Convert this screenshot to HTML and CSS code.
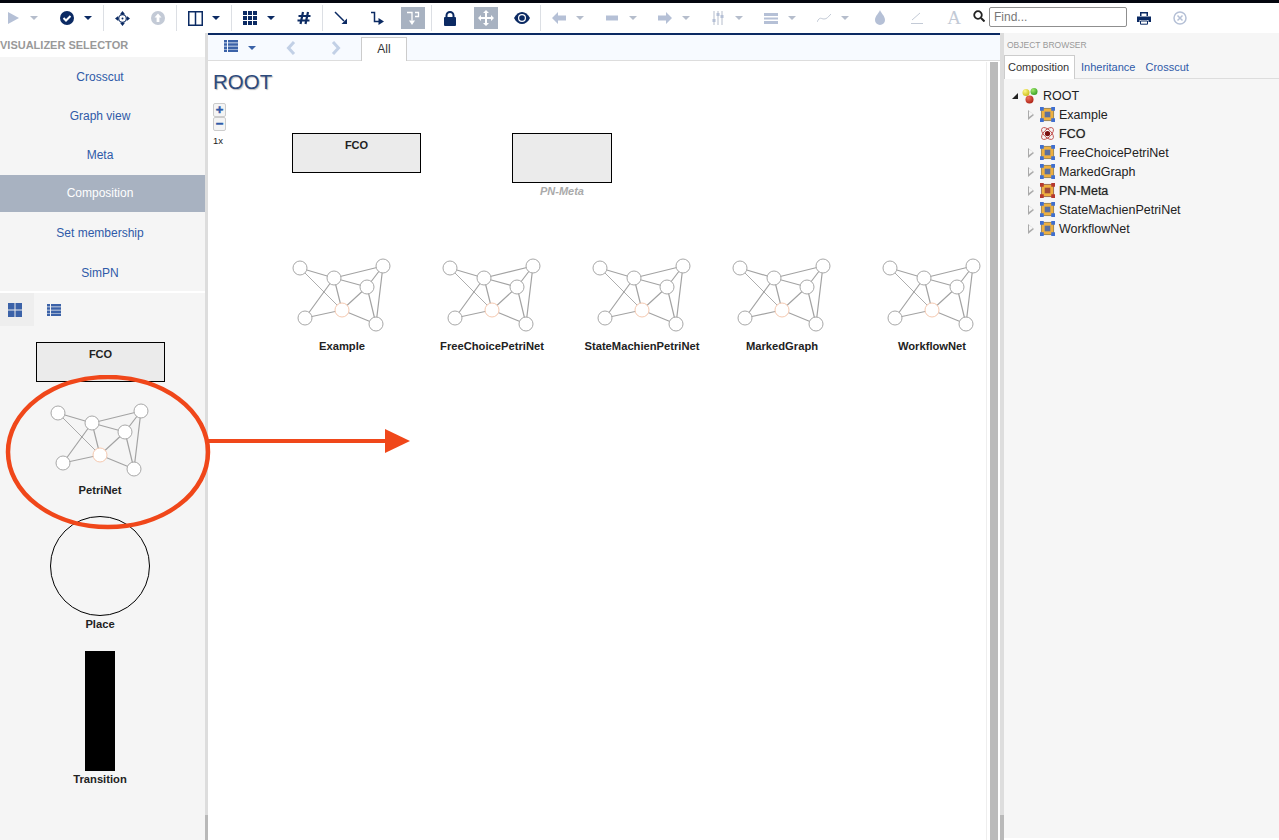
FILE: index.html
```html
<!DOCTYPE html>
<html lang="en">
<head>
  <meta charset="UTF-8">
  <title>ROOT - Composition</title>
  <link rel="stylesheet" href="styles.css">
</head>
<body>
  <svg class="defs" width="0" height="0">
    <defs>
      <radialGradient id="ball-y" cx=".35" cy=".3" r=".8"><stop offset="0" stop-color="#fdf78a"/><stop offset="1" stop-color="#c9b90f"/></radialGradient>
      <radialGradient id="ball-g" cx=".35" cy=".3" r=".8"><stop offset="0" stop-color="#9fe86b"/><stop offset="1" stop-color="#2f9a1f"/></radialGradient>
      <radialGradient id="ball-r" cx=".35" cy=".3" r=".8"><stop offset="0" stop-color="#f0705c"/><stop offset="1" stop-color="#a81c10"/></radialGradient>
    </defs>
    <symbol id="net" viewBox="0 0 104 76">
      <g class="net-edges">
        <path d="M10 10L44 20M44 20L93 8M44 20L77 29M44 20L52 52M44 20L15 60M93 8L77 29M93 8L86 66M77 29L52 52M77 29L86 66M52 52L15 60M52 52L86 66"/>
        <path class="thin" d="M10 10L52 52"/>
      </g>
      <g class="net-nodes">
        <circle cx="10" cy="10" r="7"/>
        <circle cx="44" cy="20" r="7"/>
        <circle cx="93" cy="8" r="7"/>
        <circle cx="77" cy="29" r="7"/>
        <circle cx="15" cy="60" r="7"/>
        <circle cx="86" cy="66" r="7"/>
        <circle class="hot" cx="52" cy="52" r="7"/>
      </g>
    </symbol>
    <symbol id="model" viewBox="0 0 16 16">
      <rect x="1.500" y="1.500" width="13" height="13" fill="#eeb040" stroke="#9a8450"/>
      <rect x="5" y="5" width="6" height="6" fill="#5b6f9e"/>
      <path fill="#3f6fd0" d="M0 0h4v4H0zM12 0h4v4h-4zM0 12h4v4H0zM12 12h4v4h-4z"/>
    </symbol>
    <symbol id="model-meta" viewBox="0 0 16 16">
      <rect x="1.500" y="1.500" width="13" height="13" fill="#eeb040" stroke="#9a6a50"/>
      <rect x="5" y="5" width="6" height="6" fill="#a04a3a"/>
      <path fill="#b5392f" d="M0 0h4v4H0zM12 0h4v4h-4zM0 12h4v4H0zM12 12h4v4h-4z"/>
    </symbol>
  </svg>

  <div class="topline"></div>

  <!-- toolbar -->
  <div class="toolbar">
    <div class="tb-group">
      <div class="tb-pair">
        <span class="tb-btn"><svg width="16" height="16" viewBox="0 0 16 16"><path class="off" d="M3 2l11 6-11 6z"/></svg></span>
        <span class="caret off-caret"></span>
      </div>
      <div class="tb-pair">
        <span class="tb-btn"><svg width="16" height="16" viewBox="0 0 16 16"><circle class="on" cx="8" cy="8" r="7"/><path d="M4.500 8l2.500 2.500 4.500-4.500" fill="none" stroke="#fff" stroke-width="2"/></svg></span>
        <span class="caret"></span>
      </div>
    </div>
    <span class="tb-sep"></span>
    <div class="tb-group">
      <span class="tb-btn"><svg width="15" height="15" viewBox="0 0 15 15"><circle cx="7.500" cy="7.500" r="3.800" fill="none" stroke="#0b2a63" stroke-width="1.200"/><circle class="on" cx="7.500" cy="7.500" r="1"/><path class="on" d="M7.500 0l2.500 3.200H5zM7.500 15L5 11.800h5zM0 7.500l3.200-2.500v5zM15 7.500L11.800 10V5z"/></svg></span>
      <span class="tb-btn"><svg width="16" height="16" viewBox="0 0 16 16"><circle class="off-soft" cx="8" cy="8" r="7"/><path d="M8 3.500l3.500 4H9.400V12H6.600V7.500H4.500z" fill="#fff"/></svg></span>
    </div>
    <span class="tb-sep"></span>
    <div class="tb-pair">
      <span class="tb-btn"><svg width="15" height="15" viewBox="0 0 15 15"><path d="M.75.75h13.500v13.500H.75zM7.500.75v13.500" fill="none" stroke="#0b2a63" stroke-width="1.500"/></svg></span>
      <span class="caret"></span>
    </div>
    <span class="tb-sep"></span>
    <div class="tb-group">
      <div class="tb-pair">
        <span class="tb-btn"><svg width="14" height="14" viewBox="0 0 14 14"><path class="on" d="M0 0h4v4H0zM5 0h4v4H5zM10 0h4v4h-4zM0 5h4v4H0zM5 5h4v4H5zM10 5h4v4h-4zM0 10h4v4H0zM5 10h4v4H5zM10 10h4v4h-4z"/></svg></span>
        <span class="caret"></span>
      </div>
      <span class="tb-btn"><svg width="14" height="14" viewBox="0 0 14 14"><path d="M6 1L3.500 13M11 1L8.500 13M1.500 5h12M.5 9.500h12" fill="none" stroke="#0b2a63" stroke-width="2.200"/></svg></span>
    </div>
    <span class="tb-sep"></span>
    <div class="tb-group">
      <span class="tb-btn"><svg width="14" height="14" viewBox="0 0 14 14"><path d="M1 1l9 9" stroke="#0b2a63" stroke-width="1.500"/><path class="on" d="M13 13H7.500L13 7.500z"/></svg></span>
      <span class="tb-btn"><svg width="14" height="14" viewBox="0 0 14 14"><path d="M1 1.500h3.500v9H9" fill="none" stroke="#0b2a63" stroke-width="1.500"/><path class="on" d="M14 10.500L8.500 7v7z"/></svg></span>
      <span class="tb-btn tb-active"><svg width="14" height="16" viewBox="0 0 14 16"><path d="M1 2.500h5v8M9 2.500h3.500v4H9" fill="none" stroke="#fff" stroke-width="1.300"/><path fill="#fff" d="M6 15L3 10.500h6z"/></svg></span>
    </div>
    <span class="tb-sep"></span>
    <div class="tb-group">
      <span class="tb-btn"><svg width="14" height="15" viewBox="0 0 14 15"><rect class="on" x="1" y="6" width="12" height="9" rx="1"/><path d="M3.500 7V4.500a3.500 3.500 0 0 1 7 0V7" fill="none" stroke="#0b2a63" stroke-width="2"/></svg></span>
      <span class="tb-btn tb-active"><svg width="16" height="16" viewBox="0 0 16 16"><path fill="#fff" d="M8 0l3 3H9v4h4V5l3 3-3 3V9H9v4h2l-3 3-3-3h2V9H3v2L0 8l3-3v2h4V3H5z"/></svg></span>
      <span class="tb-btn"><svg width="16" height="12" viewBox="0 0 16 12"><path class="on" d="M0 6c2-4 5-6 8-6s6 2 8 6c-2 4-5 6-8 6s-6-2-8-6z"/><circle cx="8" cy="6" r="4" fill="#fff"/><circle class="on" cx="8" cy="6" r="2.800"/></svg></span>
    </div>
    <span class="tb-sep"></span>
    <div class="tb-group tb-tight">
      <div class="tb-pair">
        <span class="tb-btn"><svg width="14" height="12" viewBox="0 0 14 12"><path class="off" d="M0 6l6-6v3.500h8v5H6V12z"/></svg></span>
        <span class="caret off-caret"></span>
      </div>
      <div class="tb-pair">
        <span class="tb-btn"><svg width="12" height="6" viewBox="0 0 12 6"><path class="off" d="M0 .5h12v5H0z"/></svg></span>
        <span class="caret off-caret"></span>
      </div>
      <div class="tb-pair">
        <span class="tb-btn"><svg width="14" height="12" viewBox="0 0 14 12"><path class="off" d="M14 6L8 0v3.500H0v5h8V12z"/></svg></span>
        <span class="caret off-caret"></span>
      </div>
      <div class="tb-pair">
        <span class="tb-btn"><svg width="12" height="14" viewBox="0 0 12 14"><path d="M2 0v14M6 0v14M10 0v14" stroke="#b5bdcc"/><path class="off" d="M.5 8h3v3h-3zM4.500 2h3v3h-3zM8.500 4h3v3h-3z"/></svg></span>
        <span class="caret off-caret"></span>
      </div>
      <div class="tb-pair">
        <span class="tb-btn"><svg width="14" height="11" viewBox="0 0 14 11"><path class="off" d="M0 0h14v3H0zM0 4.500h14v2H0zM0 8h14v3H0z"/></svg></span>
        <span class="caret off-caret"></span>
      </div>
      <div class="tb-pair">
        <span class="tb-btn"><svg width="14" height="10" viewBox="0 0 14 10"><path d="M0 9c3-6 4-3 7-3s4-2 7-5" fill="none" stroke="#c3cad6"/></svg></span>
        <span class="caret off-caret"></span>
      </div>
    </div>
    <div class="tb-group tb-last">
      <span class="tb-btn"><svg width="12" height="16" viewBox="0 0 12 16"><path class="off" d="M6 0c1 3 5 6 5 10a5 5 0 0 1-10 0C1 6 5 3 6 0z"/></svg></span>
      <span class="tb-btn"><svg width="14" height="14" viewBox="0 0 14 14"><path d="M2 9L10 2M1 12.500h12" stroke="#c3cad6" fill="none"/></svg></span>
      <span class="tb-btn tb-letter">A</span>
    </div>
    <span class="search-icon"><svg width="12" height="12" viewBox="0 0 12 12"><circle cx="5" cy="5" r="3.800" fill="none" stroke="#222" stroke-width="1.800"/><path d="M8 8l3.500 3.500" stroke="#222" stroke-width="2"/></svg></span>
    <input class="find" type="text" placeholder="Find...">
    <span class="tb-btn"><svg width="14" height="13" viewBox="0 0 14 13"><path class="on" d="M3 0h8v4H9.500V1.500h-5V4H3zM0 4.500h14V10h-2.500V8h-9v2H0z"/><path d="M3.500 9h7v3.200h-7z" fill="#fff" stroke="#0b2a63"/></svg></span>
    <span class="tb-btn tb-close"><svg width="14" height="14" viewBox="0 0 14 14"><circle cx="7" cy="7" r="6" fill="none" stroke="#b5c0d6" stroke-width="1.500"/><path d="M4.500 4.500l5 5M9.500 4.500l-5 5" stroke="#b5c0d6" stroke-width="1.500"/></svg></span>
  </div>

  <div class="workspace">
    <!-- left: visualizer selector -->
    <aside class="left-panel">
      <h4 class="panel-title vis-title">VISUALIZER SELECTOR</h4>
      <ul class="vis-list">
        <li>Crosscut</li>
        <li>Graph view</li>
        <li>Meta</li>
        <li class="active">Composition</li>
        <li>Set membership</li>
        <li>SimPN</li>
      </ul>
      <div class="view-tabs">
        <span class="view-tab selected"><svg width="14" height="14" viewBox="0 0 14 14"><path fill="#3b62a8" d="M0 0h6.500v6.500H0zM7.500 0H14v6.500H7.500zM0 7.500h6.500V14H0zM7.500 7.500H14V14H7.500z"/></svg></span>
        <span class="view-tab"><svg width="14" height="12" viewBox="0 0 14 12"><path fill="#3b62a8" d="M0 0h3v2.500H0zM4 0h10v2.500H4zM0 3.200h3v2.500H0zM4 3.200h10v2.500H4zM0 6.400h3v2.500H0zM4 6.400h10v2.500H4zM0 9.500h3V12H0zM4 9.500h10V12H4z"/></svg></span>
      </div>
      <div class="palette">
        <div class="fco-box pal-fco"><span class="box-label">FCO</span></div>
        <div class="pal-item pal-net">
          <svg class="net" width="104" height="76"><use href="#net"/></svg>
          <div class="item-label">PetriNet</div>
        </div>
        <div class="pal-item pal-place">
          <div class="place"></div>
          <div class="item-label place-label">Place</div>
        </div>
        <div class="pal-item pal-trans">
          <div class="transition"></div>
          <div class="item-label trans-label">Transition</div>
        </div>
      </div>
    </aside>
    <div class="splitter"><div class="splitter-thumb"></div></div>

    <!-- center: composition -->
    <main class="center">
      <div class="center-tabs">
        <span class="ct-list"><svg width="16" height="12" viewBox="0 0 14 12"><path fill="#3b62a8" d="M0 0h3v2.500H0zM4 0h10v2.500H4zM0 3.200h3v2.500H0zM4 3.200h10v2.500H4zM0 6.400h3v2.500H0zM4 6.400h10v2.500H4zM0 9.500h3V12H0zM4 9.500h10V12H4z"/></svg></span>
        <span class="caret blue-caret"></span>
        <span class="ct-prev"><svg width="10" height="14" viewBox="0 0 10 14"><path d="M8 1L2.500 7 8 13" fill="none" stroke="#c2d0e6" stroke-width="3"/></svg></span>
        <span class="ct-next"><svg width="10" height="14" viewBox="0 0 10 14"><path d="M2 1l5.500 6L2 13" fill="none" stroke="#c2d0e6" stroke-width="3"/></svg></span>
        <span class="ct-tab">All</span>
      </div>
      <div class="canvas">
        <h1 class="root-title">ROOT</h1>
        <div class="zoom-ctl">
          <span class="zoom-btn">+</span>
          <span class="zoom-btn">−</span>
          <span class="zoom-level">1x</span>
        </div>

        <div class="fco-box node-fco"><span class="box-label">FCO</span></div>
        <div class="node-meta">
          <div class="meta-box"></div>
          <div class="meta-label">PN-Meta</div>
        </div>

        <div class="node node-example">
          <svg class="net" width="104" height="76"><use href="#net"/></svg>
          <div class="item-label">Example</div>
        </div>
        <div class="node node-free">
          <svg class="net" width="104" height="76"><use href="#net"/></svg>
          <div class="item-label">FreeChoicePetriNet</div>
        </div>
        <div class="node node-state">
          <svg class="net" width="104" height="76"><use href="#net"/></svg>
          <div class="item-label">StateMachienPetriNet</div>
        </div>
        <div class="node node-marked">
          <svg class="net" width="104" height="76"><use href="#net"/></svg>
          <div class="item-label">MarkedGraph</div>
        </div>
        <div class="node node-work">
          <svg class="net" width="104" height="76"><use href="#net"/></svg>
          <div class="item-label">WorkflowNet</div>
        </div>

        <div class="scroll-track"><div class="scroll-thumb"></div></div>
      </div>
    </main>
    <div class="splitter splitter-right"><div class="splitter-thumb"></div></div>

    <!-- right: object browser -->
    <aside class="right-panel">
      <h4 class="panel-title obj-title">OBJECT BROWSER</h4>
      <div class="obj-tabs">
        <span class="obj-tab current">Composition</span>
        <span class="obj-tab">Inheritance</span>
        <span class="obj-tab">Crosscut</span>
      </div>
      <ul class="tree">
        <li class="tree-root">
          <span class="arrow-open"></span>
          <svg class="tree-icon" width="16" height="16" viewBox="0 0 16 16"><circle cx="4" cy="4.500" r="3.500" fill="url(#ball-y)"/><circle cx="12" cy="3.500" r="3.500" fill="url(#ball-g)"/><circle cx="7.500" cy="11.500" r="4" fill="url(#ball-r)"/></svg>
          ROOT
        </li>
        <li><span class="arrow"></span><svg class="tree-icon" width="15" height="15"><use href="#model"/></svg>Example</li>
        <li><span class="arrow none"></span><svg class="tree-icon" width="15" height="15" viewBox="0 0 16 16"><g fill="none" stroke="#c0504d"><ellipse cx="8" cy="8" rx="8" ry="4" transform="rotate(45 8 8)"/><ellipse cx="8" cy="8" rx="8" ry="4" transform="rotate(-45 8 8)"/></g><circle cx="8" cy="8" r="2.800" fill="#7a1010"/></svg><span class="blur">FCO</span></li>
        <li><span class="arrow"></span><svg class="tree-icon" width="15" height="15"><use href="#model"/></svg>FreeChoicePetriNet</li>
        <li><span class="arrow"></span><svg class="tree-icon" width="15" height="15"><use href="#model"/></svg>MarkedGraph</li>
        <li><span class="arrow"></span><svg class="tree-icon" width="15" height="15"><use href="#model-meta"/></svg><span class="blur">PN-Meta</span></li>
        <li><span class="arrow"></span><svg class="tree-icon" width="15" height="15"><use href="#model"/></svg>StateMachienPetriNet</li>
        <li><span class="arrow"></span><svg class="tree-icon" width="15" height="15"><use href="#model"/></svg>WorkflowNet</li>
      </ul>
    </aside>
  </div>

  <!-- red annotation drawn over the screenshot -->
  <svg class="annotation" width="420" height="170" viewBox="0 0 420 170">
    <ellipse cx="108" cy="77" rx="100" ry="75" fill="none" stroke="#f0471a" stroke-width="4.500"/>
    <path d="M208 66H386" stroke="#f0471a" stroke-width="4"/>
    <path d="M385 54l25 12-25 12z" fill="#f0471a"/>
  </svg>
</body>
</html>
```

FILE: styles.css
```css
* {
  box-sizing: border-box;
}
html, body {
  height: 100%;
}
body {
  margin: 0;
  height: 840px;
  overflow: hidden;
  position: relative;
  background: #fff;
  font-family: "Liberation Sans", Arial, sans-serif;
  font-size: 12px;
  color: #222;
}
ul {
  list-style: none;
  margin: 0;
  padding: 0;
}
.defs {
  position: absolute;
}
.topline {
  height: 3px;
  background: #04060f;
}

/* toolbar */
.toolbar {
  display: flex;
  align-items: center;
  height: 30px;
  padding-left: 1px;
}
.tb-group {
  display: flex;
  align-items: center;
  gap: 12px;
}
.tb-tight {
  gap: 11px;
}
.tb-last {
  gap: 13px;
  margin-left: 14px;
}
.tb-pair {
  display: flex;
  align-items: center;
}
.tb-btn {
  display: flex;
  align-items: center;
  justify-content: center;
  width: 24px;
  height: 22px;
}
.tb-active {
  background: #a8b2c1;
}
.tb-letter {
  font-family: "Liberation Serif", serif;
  font-size: 19px;
  color: #c3cad6;
}
.tb-close {
  margin-left: 12px;
}
.tb-sep {
  width: 1px;
  height: 26px;
  margin: 0 6px;
  background: #dcdfe4;
}
.caret {
  width: 18px;
  display: flex;
  justify-content: center;
}
.caret::after {
  content: "";
  border-left: 4px solid transparent;
  border-right: 4px solid transparent;
  border-top: 4px solid #0b2a63;
}
.off-caret::after {
  border-top-color: #b5bdcc;
}
.blue-caret::after {
  border-top-color: #3b62a8;
}
.on {
  fill: #0b2a63;
}
.off {
  fill: #b5c0d6;
}
.off-soft {
  fill: #c3cad6;
}
.search-icon {
  display: flex;
  margin-left: 7px;
  margin-right: 4px;
  margin-top: -4px;
}
.find {
  width: 138px;
  height: 20px;
  margin-top: -3px;
  margin-right: 5px;
  padding: 0 4px;
  border: 1px solid #8f8f8f;
  border-radius: 2px;
  font-family: inherit;
  font-size: 12px;
}
.find::placeholder {
  color: #777;
}

/* three panels */
.workspace {
  display: flex;
  height: 807px;
}
.panel-title {
  margin: 0;
  font-weight: bold;
  color: #999;
}
.splitter {
  display: flex;
  flex-direction: column;
  flex: none;
  width: 3px;
  background: #ddd;
}
.splitter-right {
  width: 4px;
}
.splitter-thumb {
  height: 25px;
  margin-top: auto;
  background: #b9b9b9;
}

/* left */
.left-panel {
  width: 205px;
  flex: none;
  background: #f5f5f5;
}
.vis-title {
  height: 24px;
  padding-top: 6px;
  font-size: 11px;
  line-height: 13px;
  background: #fff;
}
.vis-list {
  height: 236px;
  padding-top: 1px;
  border-bottom: 2px solid #fff;
}
.vis-list li {
  height: 39px;
  padding-right: 5px;
  line-height: 39px;
  text-align: center;
  color: #2f5aa8;
}
.vis-list li.active {
  height: 37px;
  margin: 0 0 2px;
  line-height: 37px;
  background: #a8b2c1;
  color: #fff;
}
.vis-list li:last-child {
  padding-top: 1px;
}
.view-tabs {
  display: flex;
  height: 33px;
}
.view-tab {
  display: flex;
  align-items: center;
  justify-content: center;
  width: 34px;
  height: 33px;
  margin-right: 5px;
  padding-right: 4px;
}
.view-tab.selected {
  background: #eee;
}
.palette {
  display: flex;
  flex-direction: column;
  align-items: center;
  padding-right: 5px;
}
.fco-box {
  width: 129px;
  height: 40px;
  padding-top: 4px;
  border: 1px solid #000;
  background: #ebebeb;
  text-align: center;
}
.box-label {
  font-size: 11px;
  font-weight: bold;
  color: #222;
}
.pal-fco {
  margin-top: 16px;
  margin-left: 1px;
}
.pal-item {
  display: flex;
  flex-direction: column;
  align-items: center;
}
.pal-net {
  margin-top: 21px;
}
.pal-net .item-label {
  margin-top: 4px;
}
.pal-place {
  margin-top: 19px;
}
.pal-trans {
  margin-top: 20px;
}
.place {
  width: 100px;
  height: 100px;
  border: 1px solid #000;
  border-radius: 50%;
}
.transition {
  width: 30px;
  height: 120px;
  background: #000;
}
.item-label {
  margin-top: 5px;
  font-size: 11.2px;
  font-weight: bold;
  line-height: 14px;
  white-space: nowrap;
  text-align: center;
  color: #222;
}
.place-label,
.trans-label {
  margin-top: 1px;
}

/* petri net thumbnail */
.net {
  display: block;
}
.net-edges path {
  fill: none;
  stroke: #a3a3a3;
  stroke-width: 1.2;
}
.net-edges path.thin {
  stroke: #777;
  stroke-width: .6;
}
.net-nodes circle {
  fill: #fff;
  stroke: #a8a8a8;
}
.net-nodes circle.hot {
  stroke: #f5c9b0;
}

/* center */
.center {
  width: 792px;
  flex: none;
  border-top: 2px solid #0b2a63;
  display: flex;
  flex-direction: column;
}
.center-tabs {
  display: flex;
  align-items: center;
  height: 26px;
  padding-left: 15px;
  border-bottom: 1px solid #ddd;
  background: #f7faff;
}
.center-tabs .caret {
  margin-left: 4px;
}
.ct-prev {
  display: flex;
  margin-left: 25px;
}
.ct-next {
  display: flex;
  margin-left: 35px;
}
.ct-tab {
  align-self: flex-end;
  width: 46px;
  height: 24px;
  margin-left: 20px;
  margin-bottom: -1px;
  line-height: 22px;
  text-align: center;
  background: #fff;
  border: 1px solid #ccc;
  border-bottom: none;
  color: #333;
}
.canvas {
  position: relative;
  flex: 1;
}
.root-title {
  margin: 0;
  padding: 9px 0 0 5px;
  font-size: 20.5px;
  font-weight: normal;
  line-height: 24px;
  color: #2d4a7c;
  text-shadow: 1px 1px 1px #bbb;
}
.zoom-ctl {
  display: flex;
  flex-direction: column;
  align-items: flex-start;
  margin: 9px 0 0 5px;
}
.zoom-btn {
  width: 13px;
  height: 14px;
  border: 1px solid #ccc;
  border-radius: 2px;
  background: #f4f4f4;
  color: #2f5aa8;
  font-size: 13px;
  font-weight: bold;
  line-height: 12px;
  text-align: center;
  -webkit-text-stroke: .5px #2f5aa8;
}
.zoom-level {
  margin-top: 4px;
  font-size: 9.5px;
  line-height: 12px;
}
.fco-box.node-fco {
  position: absolute;
  left: 84px;
  top: 72px;
}
.node-meta {
  position: absolute;
  left: 304px;
  top: 72px;
  width: 100px;
}
.meta-box {
  height: 50px;
  border: 1px solid #000;
  background: #ebebeb;
}
.meta-label {
  margin-top: 2px;
  font-size: 11px;
  font-weight: bold;
  font-style: italic;
  line-height: 13px;
  text-align: center;
  color: #aaa;
}
.node {
  position: absolute;
  top: 197px;
  width: 140px;
  display: flex;
  flex-direction: column;
  align-items: center;
}
.node-example {
  left: 64px;
}
.node-free {
  left: 214px;
}
.node-state {
  left: 364px;
}
.node-marked {
  left: 504px;
}
.node-work {
  left: 654px;
}
.scroll-track {
  position: absolute;
  left: 778px;
  top: 1px;
  bottom: 0;
  width: 14px;
  background: #fff;
  border-left: 1px solid #eee;
}
.scroll-thumb {
  width: 8px;
  height: 100%;
  margin-left: 3px;
  background: #bbb;
}

/* right */
.right-panel {
  flex: 1;
  height: 805px;
  background: #f6f6f6;
}
.obj-title {
  height: 22px;
  padding: 6px 0 0 3px;
  font-size: 8.5px;
  font-weight: normal;
  line-height: 12px;
}
.obj-tabs {
  display: flex;
  height: 24px;
  border-bottom: 1px solid #ddd;
}
.obj-tab {
  padding: 0 4px 0 6px;
  line-height: 25px;
  font-size: 11px;
  color: #2f5aa8;
}
.obj-tab.current {
  width: 71px;
  padding: 0 3px;
  border: 1px solid #ccc;
  border-bottom: none;
  background: #fff;
  line-height: 23px;
  height: 24px;
  color: #333;
}
.tree {
  padding-top: 7px;
  padding-left: 5px;
}
.tree li {
  display: flex;
  align-items: center;
  height: 19px;
  padding-left: 19px;
  font-size: 12.5px;
}
.tree li.tree-root {
  padding-left: 3px;
}
.tree-icon {
  flex: none;
  margin-right: 4px;
}
.tree-root .tree-icon {
  margin-right: 5px;
}
.arrow {
  flex: none;
  width: 0;
  height: 0;
  margin-right: 6px;
  border-left: 6px solid #aaa;
  border-top: 5px solid transparent;
  border-bottom: 5px solid transparent;
  position: relative;
}
.arrow::after {
  content: "";
  position: absolute;
  left: -5px;
  top: -3.500px;
  border-left: 4px solid #f6f6f6;
  border-top: 3.500px solid transparent;
  border-bottom: 3.500px solid transparent;
}
.arrow.none {
  visibility: hidden;
}
.arrow-open {
  flex: none;
  width: 0;
  height: 0;
  margin-right: 4px;
  border-bottom: 6px solid #222;
  border-left: 6px solid transparent;
}
.blur {
  text-shadow: 0 0 1px #888;
}

/* annotation */
.annotation {
  position: absolute;
  left: 0;
  top: 375px;
}
```
